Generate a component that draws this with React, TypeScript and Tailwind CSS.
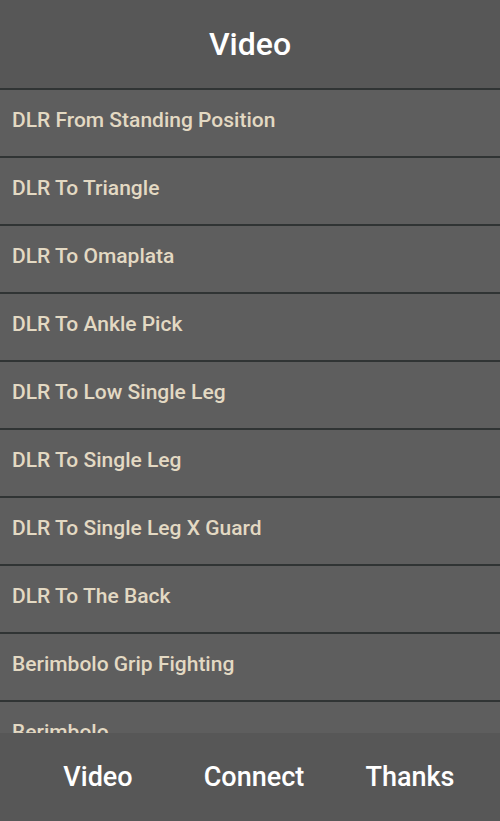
const items = [
  "DLR From Standing Position",
  "DLR To Triangle",
  "DLR To Omaplata",
  "DLR To Ankle Pick",
  "DLR To Low Single Leg",
  "DLR To Single Leg",
  "DLR To Single Leg X Guard",
  "DLR To The Back",
  "Berimbolo Grip Fighting",
  "Berimbolo",
];

export default function App() {
  return (
    <div
      className="flex h-[821px] w-[500px] flex-col overflow-hidden bg-[#5e5e5e]"
      style={{ fontFamily: "Roboto, 'Noto Sans', sans-serif" }}
    >
      <header className="flex h-[88px] shrink-0 items-center justify-center bg-[#575757]">
        <h1 className="text-[32px] font-medium leading-none text-white">Video</h1>
      </header>

      <ul className="min-h-0 flex-1 overflow-hidden">
        {items.map((item) => (
          <li
            key={item}
            className="flex h-[68px] items-center border-t-2 border-[#303434] px-3 pb-[4px] text-[21px] font-medium text-[#e3d9c3]"
          >
            {item}
          </li>
        ))}
      </ul>

      <nav className="grid h-[88px] shrink-0 grid-cols-3 bg-[#575757] pl-[20px] pr-[12px]">
        {["Video", "Connect", "Thanks"].map((tab) => (
          <button
            key={tab}
            className="flex items-center justify-center text-[27px] font-medium leading-none text-white"
          >
            {tab}
          </button>
        ))}
      </nav>
    </div>
  );
}
